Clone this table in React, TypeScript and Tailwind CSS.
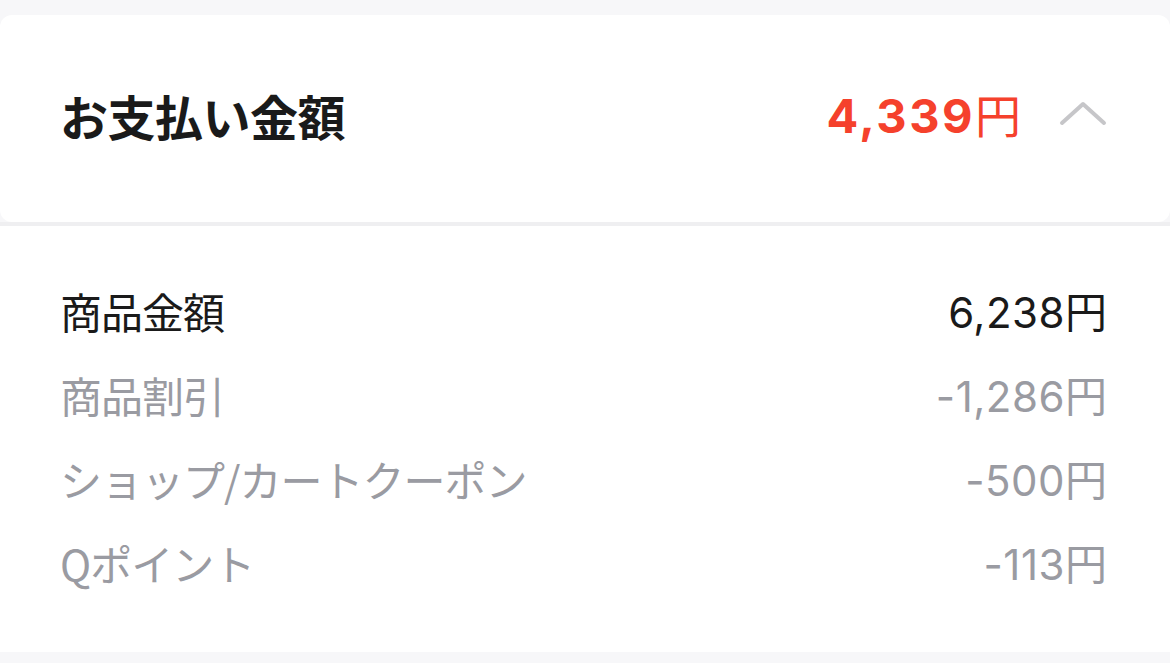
const rows = [
  { label: "商品金額", value: "6,238", strong: true },
  { label: "商品割引", value: "-1,286", strong: false },
  { label: "ショップ/カートクーポン", value: "-500", strong: false },
  { label: "Qポイント", value: "-113", strong: false },
];

function Chevron() {
  return (
    <svg width="48" height="28" viewBox="0 0 48 28" fill="none" className="shrink-0">
      <polyline
        points="3,22 24,3 45,22"
        stroke="#c6c6c9"
        strokeWidth="4"
        strokeLinecap="round"
        strokeLinejoin="round"
      />
    </svg>
  );
}

export default function App() {
  return (
    <div className="min-h-[663px] w-[1170px] bg-[#f7f7f9] pt-[15px] font-['Noto_Sans_CJK_JP',sans-serif]">
      <div className="flex h-[207px] items-center justify-between rounded-[12px] bg-white pb-[8px] pl-[60px] pr-[63px]">
        <h1 className="text-[48px] font-bold leading-none tracking-[-0.5px] text-[#1a1a1a]">
          お支払い金額
        </h1>

        <div className="flex items-center gap-[38px]">
          <p className="flex items-baseline leading-none text-[#f5412c]">
            <span className="font-['Inter','Noto_Sans_CJK_JP',sans-serif] text-[47px] font-bold tracking-[2.5px]">
              4,339
            </span>
            <span className="text-[46px]">円</span>
          </p>
          <Chevron />
        </div>
      </div>

      <div className="h-[4px] bg-[#efeff1]" />

      <div className="bg-white pb-[47px] pl-[60px] pr-[63px] pt-[43px]">
        {rows.map((row) => (
          <div
            key={row.label}
            className={`flex h-[84px] items-center justify-between text-[42px] ${
              row.strong ? "text-[#1a1a1a]" : "text-[#9a9ba2]"
            }`}
          >
            <span className="leading-none tracking-[-1px]">{row.label}</span>
            <span className="flex items-baseline leading-none">
              <span className="font-['Inter','Noto_Sans_CJK_JP',sans-serif] tracking-[0.5px]">
                {row.value}
              </span>
              <span>円</span>
            </span>
          </div>
        ))}
      </div>
    </div>
  );
}
